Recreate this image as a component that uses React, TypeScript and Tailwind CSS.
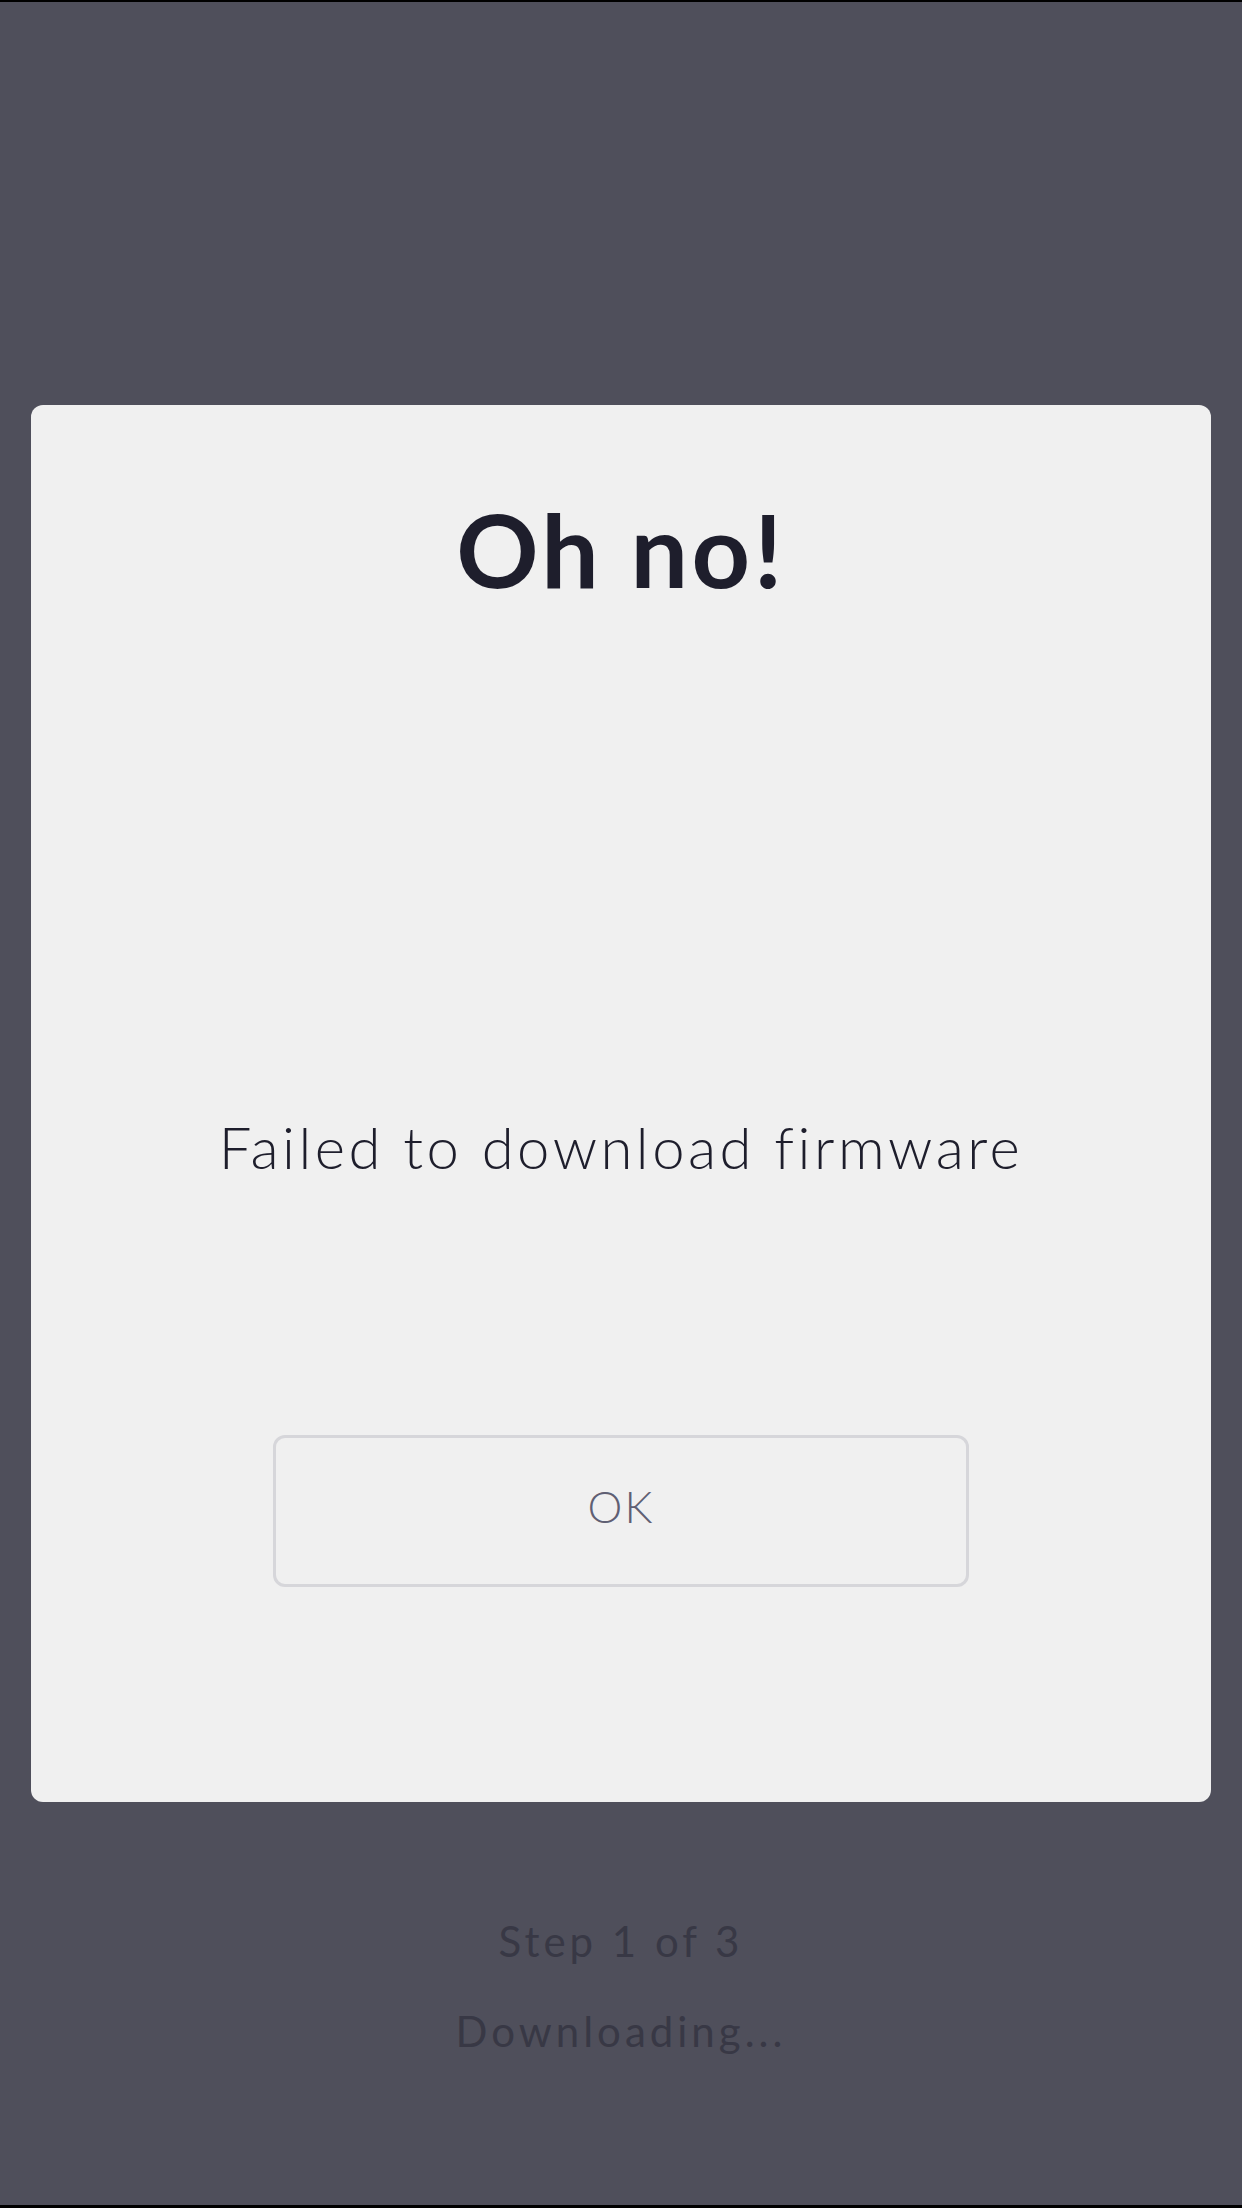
import React from 'react';

const App: React.FC = () => {
  return (
    <div
      className="h-[2208px] w-full flex flex-col bg-[#4f4f5b] border-t-2 border-b-[3px] border-black"
      style={{ fontFamily: 'Lato, "Open Sans", sans-serif' }}
    >
      <div className="mt-[403px] mx-[31px] rounded-[12px] bg-[#f0f0f0] pt-[93px] pb-[215px] flex flex-col items-center">
        <h1 className="text-[102px] leading-none font-bold tracking-[3.5px] text-[#1e1e2c]">Oh no!</h1>
        <p className="mt-[518px] text-[58px] leading-none font-light tracking-[3.5px] text-[#1e1e2c]">
          Failed to download firmware
        </p>
        <button className="mt-[259px] w-[696px] h-[152px] rounded-[12px] border-[3px] border-[#d6d6da] flex items-center justify-center pb-[10px] text-[44px] font-light tracking-[2px] text-[#5f5f73]">
          OK
        </button>
      </div>

      <div className="mt-[94px] flex flex-col items-center text-[42px] leading-[90px] tracking-[4px] text-[#383845]">
        <p>Step 1 of 3</p>
        <p>Downloading...</p>
      </div>
    </div>
  );
};

export default App;
